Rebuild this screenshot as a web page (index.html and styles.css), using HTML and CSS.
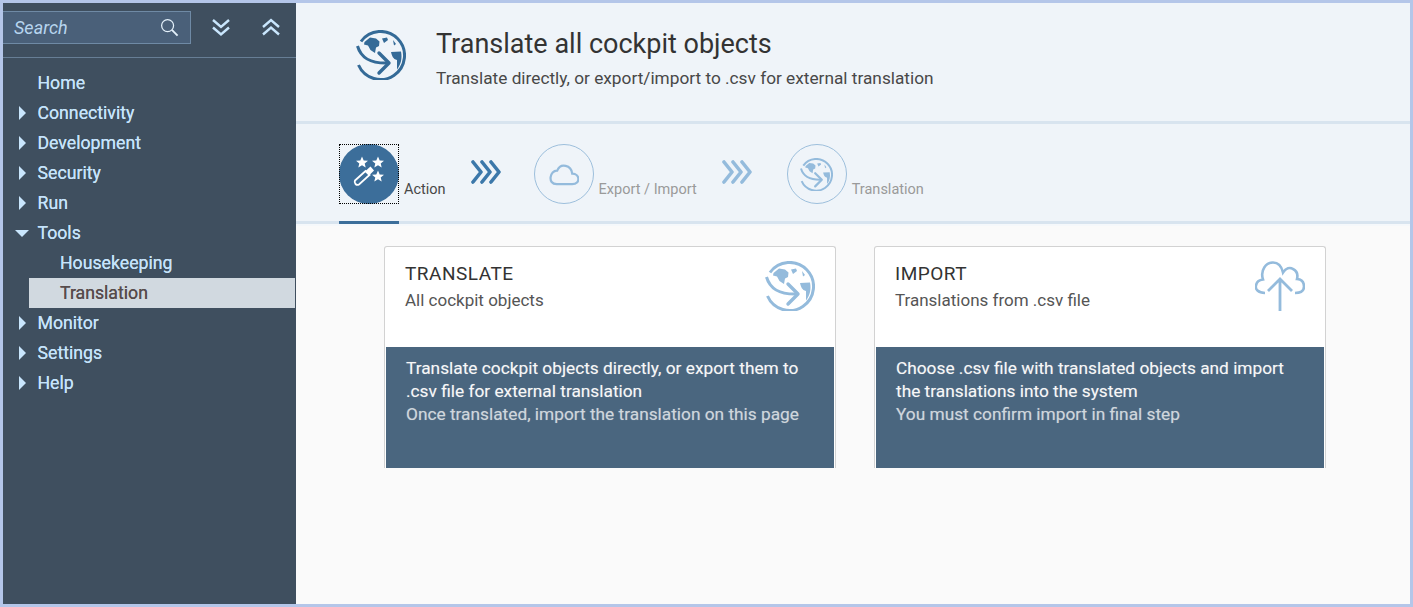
FILE: index.html
```html
<!DOCTYPE html>
<html lang="en">
<head>
<meta charset="utf-8">
<title>Translate all cockpit objects</title>
<link rel="stylesheet" href="styles.css">
</head>
<body>
<svg class="defs" width="0" height="0" aria-hidden="true">
  <symbol id="globe" viewBox="0 0 50 50">
    <path d="M5 11.500A24 24 0 1 1 2.500 35" fill="none" stroke="currentColor" stroke-width="3"/>
    <path d="M1.500 16C5 28 14 33.500 32 33" fill="none" stroke="currentColor" stroke-width="3"/>
    <path d="M23 23L33 33 23 43" fill="none" stroke="currentColor" stroke-width="3.400" stroke-linecap="round" stroke-linejoin="round"/>
    <path d="M8.500 12L14 7.500 20 8.500 23.500 11.500 23 16 20 17.500 19 23 14.500 20 12 15.500 8 14.500Z M26 8.500L31 7.500 32 10 28 13Z M37 10L40 14 38 15.500Z M35 22L45 21.500C46.500 29 44.500 35 41 39.500L41 30C37 29 36 26 35 22Z" fill="currentColor"/>
  </symbol>
</svg>
<div class="frame">
  <aside class="side">
    <div class="side-top">
      <div class="search"><span class="search-text">Search</span>
        <svg class="search-icon" viewBox="0 0 20 20"><circle cx="8" cy="8" r="6.300" fill="none" stroke="currentColor" stroke-width="1.300"/><path d="M12.500 12.500L18.500 18.500" stroke="currentColor" stroke-width="2"/></svg>
      </div>
      <svg class="chev" viewBox="0 0 20 20"><path d="M2 3L10 10 18 3M2 10.500L10 17.500 18 10.500" fill="none" stroke="currentColor" stroke-width="2.400"/></svg>
      <svg class="chev" viewBox="0 0 20 20"><path d="M2 10L10 3 18 10M2 17.500L10 10.500 18 17.500" fill="none" stroke="currentColor" stroke-width="2.400"/></svg>
    </div>
    <nav class="tree">
      <div class="item"><span class="label">Home</span></div>
      <div class="item"><i class="arrow"></i><span class="label">Connectivity</span></div>
      <div class="item"><i class="arrow"></i><span class="label">Development</span></div>
      <div class="item"><i class="arrow"></i><span class="label">Security</span></div>
      <div class="item"><i class="arrow"></i><span class="label">Run</span></div>
      <div class="item"><i class="arrow down"></i><span class="label">Tools</span></div>
      <div class="item sub"><span class="label">Housekeeping</span></div>
      <div class="item sub selected"><span class="label">Translation</span></div>
      <div class="item"><i class="arrow"></i><span class="label">Monitor</span></div>
      <div class="item"><i class="arrow"></i><span class="label">Settings</span></div>
      <div class="item"><i class="arrow"></i><span class="label">Help</span></div>
    </nav>
  </aside>
  <main class="main">
    <header class="head">
      <svg class="head-icon"><use href="#globe"/></svg>
      <div class="head-text">
        <h1>Translate all cockpit objects</h1>
        <p>Translate directly, or export/import to .csv for external translation</p>
      </div>
    </header>
    <div class="steps">
      <div class="step active">
        <div class="focus">
          <div class="disc">
            <svg viewBox="0 0 60 60" class="disc-icon">
              <path d="M23 12.500l1.700 3.900 4.300.3-3.300 2.700 1 4.100-3.700-2.300-3.700 2.300 1-4.100-3.300-2.700 4.300-.3zM39 12.500l1.700 3.900 4.300.3-3.300 2.700 1 4.100-3.700-2.300-3.700 2.300 1-4.100-3.300-2.700 4.300-.3zM39 26.500l1.700 3.900 4.300.3-3.300 2.700 1 4.100-3.700-2.300-3.700 2.300 1-4.100-3.300-2.700 4.300-.3z" fill="#fff"/>
              <path d="M16 36.500L26.500 27 30.500 31 20 40.500Q18 41.500 16.500 40 15 38.500 16 36.500Z" fill="none" stroke="#fff" stroke-width="1.800"/>
              <path d="M26.500 27L31.500 22.500 35 26.500 30.500 31Z" fill="#fff"/>
            </svg>
          </div>
        </div>
        <span class="step-label">Action</span>
      </div>
      <svg class="triple" viewBox="0 0 30 24"><path d="M2 2L10 12 2 22M11 2L19 12 11 22M20 2L28 12 20 22" fill="none" stroke="currentColor" stroke-width="3.600" stroke-linecap="round" stroke-linejoin="round"/></svg>
      <div class="step">
        <div class="disc">
          <svg viewBox="0 0 32 24" class="cloud"><path d="M9 22.500H25C34 22.500 33 11.500 25 11.500 24 3 13 0 9.500 8.500 2 8 -1 22.500 9 22.500Z" fill="none" stroke="currentColor" stroke-width="2.300"/></svg>
        </div>
        <span class="step-label">Export / Import</span>
      </div>
      <svg class="triple pale" viewBox="0 0 30 24"><path d="M2 2L10 12 2 22M11 2L19 12 11 22M20 2L28 12 20 22" fill="none" stroke="currentColor" stroke-width="3.600" stroke-linecap="round" stroke-linejoin="round"/></svg>
      <div class="step">
        <div class="disc"><svg class="disc-globe"><use href="#globe"/></svg></div>
        <span class="step-label">Translation</span>
      </div>
    </div>
    <section class="cards">
      <article class="card">
        <div class="card-top">
          <div>
            <h2>TRANSLATE</h2>
            <p>All cockpit objects</p>
          </div>
          <svg class="card-icon"><use href="#globe"/></svg>
        </div>
        <div class="card-body">
          <p class="strong">Translate cockpit objects directly, or export them to .csv file for external translation</p>
          <p class="soft">Once translated, import the translation on this page</p>
        </div>
      </article>
      <article class="card">
        <div class="card-top">
          <div>
            <h2>IMPORT</h2>
            <p>Translations from .csv file</p>
          </div>
          <svg class="card-icon" viewBox="0 0 50 50"><path d="M10 32C3 32 0 28 1 24.500 1.500 21 4 19 8 18.500 5 9 11 1.500 18 1.500 22.500 1.500 26.500 5 28 11.500 31 7 35 6 38 8 42 10 43 14 42 18 47 18.500 49 22 49 25.500 49 29.500 46 32 40 32" fill="none" stroke="currentColor" stroke-width="2.600"/><path d="M25 50V18M13 30L25 18 37 30" fill="none" stroke="currentColor" stroke-width="2.800"/></svg>
        </div>
        <div class="card-body">
          <p class="strong">Choose .csv file with translated objects and import the translations into the system</p>
          <p class="soft">You must confirm import in final step</p>
        </div>
      </article>
    </section>
  </main>
</div>
</body>
</html>
```
FILE: styles.css
```css
* { box-sizing: border-box; }
html, body { margin: 0; height: 100%; }
body { font-family: Roboto, "Noto Sans", Arial, sans-serif; overflow: hidden; }
h1, h2, p { margin: 0; font-weight: 400; }
.defs { position: absolute; }
.frame { display: flex; width: 1413px; height: 607px; border: 3px solid #b4c6e9; background: #fafafa; }

.side { width: 293px; flex: none; background: #3f4f5f; color: #c5e3fb; }
.side-top { display: flex; align-items: center; height: 55px; border-bottom: 1px solid #677e95; padding-bottom: 6px; }
.search { display: flex; align-items: center; justify-content: space-between; width: 188px; height: 33px; padding: 0 11px; background: #4a6079; border: 1px solid #6f8aa5; border-left: 0; }
.search-text { font-style: italic; font-size: 18px; color: #b7d5ef; }
.search-icon { width: 19px; height: 19px; color: #e4f1fb; }
.chev { width: 20px; height: 20px; color: #c9e6fd; margin-left: 20px; }
.chev + .chev { margin-left: 30px; }

.tree { padding-top: 10px; }
.item { position: relative; height: 30px; line-height: 30px; font-size: 17.700px; padding-left: 34.500px; text-shadow: 0 0 .5px currentColor; }
.item.sub { margin-left: 26px; padding-left: 31px; }
.item.selected { background: #d1d9e0; color: #574c4c; margin-right: 1px; }
.arrow { position: absolute; left: 16px; top: 8px; border-left: 7px solid #c9e6fd; border-top: 7px solid transparent; border-bottom: 7px solid transparent; }
.arrow.down { left: 12px; top: 12px; border-top: 7px solid #c9e6fd; border-left: 7px solid transparent; border-right: 7px solid transparent; border-bottom: 0; }

.main { flex: 1; min-width: 0; display: flex; flex-direction: column; }
.head { display: flex; flex: none; height: 121px; background: #eff4f9; border-bottom: 3px solid #d8e4ef; padding: 25px 0 0 58px; }
.head-icon { width: 50px; height: 50px; color: #346a97; margin: 2px 0 0 2px; }
.head-text { margin-left: 30px; color: #333; }
.head-text h1 { font-size: 27px; line-height: 32px; }
.head-text p { font-size: 17.250px; line-height: 22px; margin-top: 7px; color: #484848; }

.steps { display: flex; flex: none; align-items: flex-start; height: 100px; background: #eff4f9; border-bottom: 3px solid #d8e4ef; box-shadow: 0 2px 0 #f5f8fb; padding: 20px 0 0 43px; position: relative; }
.step { display: flex; align-items: flex-end; height: 60px; }
.focus { width: 60px; height: 60px; outline: 1px dotted #000; outline-offset: -1px; }
.disc { width: 60px; height: 60px; border-radius: 50%; border: 1px solid #9dbfdc; display: flex; align-items: center; justify-content: center; color: #94bbdc; }
.step-label { font-size: 14.500px; line-height: 20px; margin-left: 5px; color: #9a9a9a; margin-bottom: 4px; }
.focus .disc { background: #3c6e9a; border: 0; }
.step.active .step-label { color: #484848; }
.step.active::after { content: ""; position: absolute; left: 43px; bottom: -3px; width: 60px; height: 3px; background: #3c6e9a; }
.disc-icon { width: 60px; height: 60px; }
.cloud { width: 31px; height: 24px; }
.disc-globe { width: 33px; height: 33px; }
.triple { width: 30px; height: 24px; margin: 16px 0 0 25px; color: #3c78aa; flex: none; }
.triple.pale { color: #94bbdc; }
.step + .triple + .step { margin-left: 33px; }
.triple.pale + .step { margin-left: 35px; }

.cards { display: flex; gap: 38px; padding: 22px 0 0 88px; }
.card { width: 452px; height: 222px; border: 1px solid #d2d2d2; border-bottom: 0; border-top-left-radius: 3px; border-top-right-radius: 3px; background: #fff; display: flex; flex-direction: column; }
.card-top { flex: 1; display: flex; justify-content: space-between; padding: 14px 20px 0 20px; }
.card-top h2 { font-size: 19px; line-height: 26px; color: #333; letter-spacing: .5px; }
.card-top p { font-size: 17px; line-height: 26px; color: #555; }
.card-icon { width: 50px; height: 50px; color: #94bbdc; }
.card-body { height: 121px; margin: 0 1px; background: #4a667f; padding: 10px 30px 0 20px; font-size: 17.300px; line-height: 23px; text-shadow: 0 0 1px rgba(255, 255, 255, .35); }
.strong { color: #f7f7f7; }
.soft { color: #cfd6dc; }
```
